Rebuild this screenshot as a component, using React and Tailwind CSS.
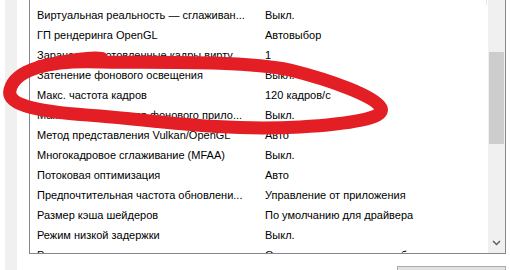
import React from "react";

const rows = [
  ["Виртуальная реальность — сглаживан...", "Выкл."],
  ["ГП рендеринга OpenGL", "Автовыбор"],
  ["Заранее подготовленные кадры вирту...", "1"],
  ["Затенение фонового освещения", "Выкл."],
  ["Макс. частота кадров", "120 кадров/с"],
  ["Макс. частота кадров фонового прило...", "Выкл."],
  ["Метод представления Vulkan/OpenGL", "Авто"],
  ["Многокадровое сглаживание (MFAA)", "Выкл."],
  ["Потоковая оптимизация", "Авто"],
  ["Предпочтительная частота обновлени...", "Управление от приложения"],
  ["Размер кэша шейдеров", "По умолчанию для драйвера"],
  ["Режим низкой задержки", "Выкл."],
  ["Режим управления электропитанием", "Оптимальное энергопотребление"],
];

function SettingRow({ name, value }) {
  return (
    <div className="h-[20px] flex items-center whitespace-nowrap shrink-0">
      <div className="w-[227px] pl-[7px] overflow-hidden">{name}</div>
      <div className="pl-[8px]">{value}</div>
    </div>
  );
}

function Scrollbar() {
  return (
    <div className="w-[17px] bg-[#f0f0f0] flex flex-col items-center">
      <div className="h-[52px] shrink-0" />
      <div className="w-[15px] h-[92px] bg-[#cdcdcd] shrink-0" />
      <div className="flex-1" />
      <svg width="9" height="6" viewBox="0 0 9 6" className="mb-[7px]">
        <path d="M1 1 L4.5 4.5 L8 1" fill="none" stroke="#606060" strokeWidth="1.5" />
      </svg>
    </div>
  );
}

// red marker scribble drawn over the list
function Scribble() {
  return (
    <svg
      width="510"
      height="270"
      viewBox="0 0 510 270"
      className="absolute inset-0 pointer-events-none"
    >
      <path
        d="M100 62 C50 60, 15 69, 10 90 C6 106, 40 112, 100 116 C160 121, 220 131, 300 127 C350 124, 386 118, 381 108 C375 96, 330 80, 290 70 C240 60, 150 63, 100 62"
        fill="none"
        stroke="#e31e24"
        strokeWidth="13"
        strokeLinecap="round"
        strokeLinejoin="round"
      />
      <path d="M40 66 C65 61, 88 56, 102 58" fill="none" stroke="#e31e24" strokeWidth="12" strokeLinecap="round" />
    </svg>
  );
}

export default function App() {
  return (
    <div className="relative w-[510px] h-[270px] bg-white flex overflow-hidden font-['Liberation_Sans',Arial,sans-serif] text-[11px] text-black">
      <div className="w-[5px] shrink-0" />
      <div className="w-[12px] shrink-0 bg-[#f0f0f0]" />
      <div className="w-[12px] shrink-0" />
      <div className="flex flex-col">
        <div className="w-[477px] h-[254px] shrink-0 border-l border-r border-b border-[#828790] flex overflow-hidden">
          <div className="flex-1 flex flex-col overflow-hidden">
            <div className="h-[5px] shrink-0">
              <div className="w-[457px] h-full border-r border-[#e5e5e5]" />
            </div>
            {rows.map(([name, value]) => (
              <SettingRow key={name} name={name} value={value} />
            ))}
          </div>
          <Scrollbar />
        </div>
        <div className="flex justify-end pt-[12px] shrink-0">
          <div className="w-[109px] h-[22px] bg-[#e1e1e1] border border-[#adadad]" />
        </div>
      </div>
      <Scribble />
    </div>
  );
}
